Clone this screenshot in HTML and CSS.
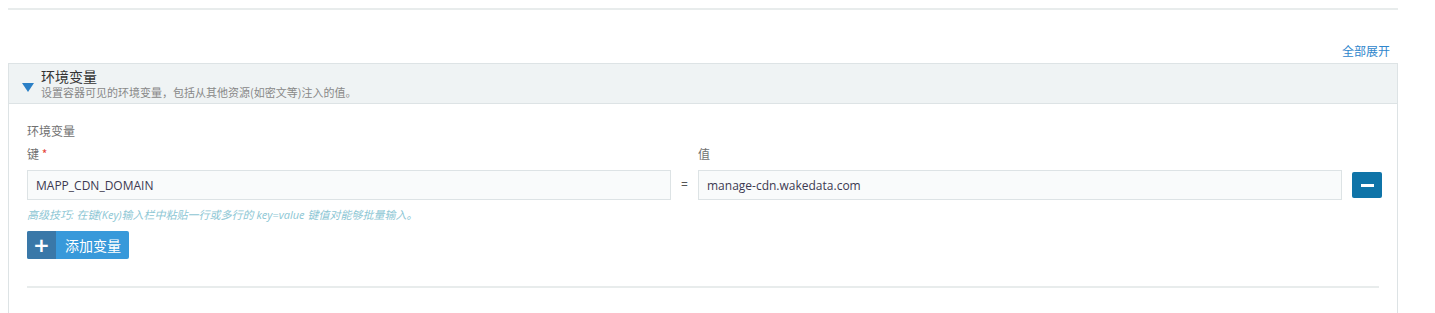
FILE: index.html
```html
<!DOCTYPE html>
<html lang="zh-CN">
<head>
    <meta charset="UTF-8">
    <title>环境变量</title>
    <link rel="stylesheet" href="styles.css">
</head>
<body>
    <div class="page">
        <div class="top-rule"></div>
        <div class="toolbar">
            <a class="expand-all" href="#">全部展开</a>
        </div>

        <div class="panel">
            <div class="panel-head">
                <span class="caret"></span>
                <div class="head-text">
                    <div class="head-title">环境变量</div>
                    <div class="head-desc">设置容器可见的环境变量，包括从其他资源(如密文等)注入的值。</div>
                </div>
            </div>

            <div class="panel-body">
                <div class="section-label">环境变量</div>

                <div class="kv-grid">
                    <div class="field-label">键 <span class="req">*</span></div>
                    <div></div>
                    <div class="field-label">值</div>
                    <div></div>

                    <input class="text-input" type="text" value="MAPP_CDN_DOMAIN">
                    <div class="eq">=</div>
                    <input class="text-input" type="text" value="manage-cdn.wakedata.com">
                    <button class="btn-remove"><span class="minus"></span></button>
                </div>

                <p class="tip">高级技巧: 在键(Key)输入栏中粘贴一行或多行的 key=value 键值对能够批量输入。</p>

                <button class="btn-add">
                    <span class="btn-add-icon">+</span>
                    <span class="btn-add-text">添加变量</span>
                </button>

                <div class="divider"></div>
            </div>
        </div>
    </div>
</body>
</html>
```

FILE: styles.css
```css
body {
    margin: 0;
    background: #fff;
    font-family: "Open Sans", "Noto Sans CJK SC", sans-serif;
    color: #333;
}

.page {
    padding: 8px 37px 0 8px;
}

.top-rule {
    height: 2px;
    background: #e8ecec;
}

.toolbar {
    text-align: right;
    padding: 29px 8px 0 0;
    height: 24px;
}

.expand-all {
    font-size: 12px;
    color: #2f86cc;
    text-decoration: none;
    font-family: "Noto Sans CJK SC", sans-serif;
}

.panel {
    border: 1px solid #dde3e5;
    border-bottom: none;
}

.panel-head {
    display: flex;
    align-items: center;
    height: 39px;
    background: #eff3f4;
    border-bottom: 1px solid #dde3e5;
    padding-left: 13px;
}

.caret {
    width: 0;
    height: 0;
    border-left: 6px solid transparent;
    border-right: 6px solid transparent;
    border-top: 9px solid #2b7fc6;
    margin: 7px 7px 0 0;
}

.head-text {
    font-family: "Noto Sans CJK SC", sans-serif;
}

.head-title {
    font-size: 14px;
    line-height: 17px;
    color: #333;
}

.head-desc {
    font-size: 11px;
    line-height: 14px;
    color: #888;
}

.panel-body {
    padding: 19px 18px 0 18px;
    height: 190px;
}

.section-label,
.field-label {
    font-size: 12px;
    color: #707070;
    font-family: "Noto Sans CJK SC", sans-serif;
}

.section-label {
    line-height: 16px;
}

.kv-grid {
    display: grid;
    grid-template-columns: 1fr 27px 1fr 40px;
    margin-right: -3px;
    margin-top: 7px;
    row-gap: 8px;
}

.field-label {
    line-height: 16px;
}

.req {
    color: #e5453a;
}

.text-input {
    box-sizing: border-box;
    height: 30px;
    padding: 0 8px;
    border: 1px solid #dde3e5;
    background: #f9fbfb;
    font-family: "Open Sans", sans-serif;
    font-size: 12px;
    color: #3c3a52;
    outline: none;
    min-width: 0;
}

.eq {
    text-align: center;
    font-size: 12px;
    line-height: 30px;
    color: #555;
}

.btn-remove {
    justify-self: end;
    align-self: center;
    width: 30px;
    height: 26px;
    border: none;
    border-radius: 2px;
    background: #0f74a8;
    display: flex;
    align-items: center;
    justify-content: center;
    padding: 0;
}

.minus {
    width: 13px;
    height: 3px;
    background: #fff;
}

.tip {
    margin: 7px 0 0 0;
    font-size: 11px;
    line-height: 16px;
    font-style: italic;
    color: #8cc6d4;
    font-family: "Open Sans", "Noto Sans CJK SC", sans-serif;
}

.btn-add {
    display: flex;
    margin-top: 8px;
    padding: 0;
    border: none;
    border-radius: 2px;
    overflow: hidden;
    height: 28px;
    background: #3899da;
    color: #fff;
    cursor: pointer;
}

.btn-add-icon {
    width: 29px;
    height: 28px;
    line-height: 28px;
    background: #3a78a8;
    font-size: 20px;
    font-weight: bold;
    font-family: "DejaVu Sans", sans-serif;
}

.btn-add-text {
    padding: 0 8px 0 9px;
    line-height: 28px;
    font-size: 14px;
    font-family: "Noto Sans CJK SC", sans-serif;
}

.divider {
    height: 2px;
    background: #e8ecec;
    margin-top: 27px;
}
```
